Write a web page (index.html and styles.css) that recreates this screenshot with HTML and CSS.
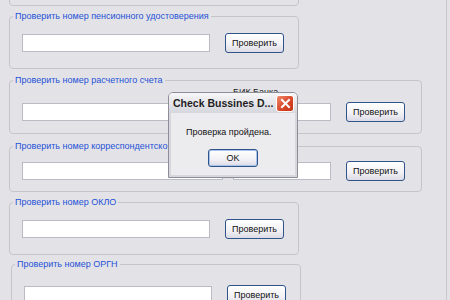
FILE: index.html
```html
<!DOCTYPE html>
<html>

<head>
    <title>Check Bussines Data</title>
    <link rel="stylesheet" href="styles.css">
</head>

<body>
    <div class="form">
        <!-- Cut off group at the top -->
        <fieldset class="group group-short group-top">
            <div class="row"></div>
        </fieldset>

        <!-- Pension certificate -->
        <fieldset class="group group-short group-pension">
            <legend>Проверить номер пенсионного удостоверения</legend>
            <div class="row">
                <input class="text" type="text">
                <button class="check">Проверить</button>
            </div>
        </fieldset>

        <!-- Settlement account -->
        <fieldset class="group group-wide group-account">
            <legend>Проверить номер расчетного счета</legend>
            <div class="row">
                <input class="text text-account" type="text">
                <div class="field">
                    <span class="field-caption">БИК Банка</span>
                    <input class="text text-bik" type="text">
                </div>
                <button class="check">Проверить</button>
            </div>
        </fieldset>

        <!-- Correspondent account -->
        <fieldset class="group group-wide group-corr">
            <legend>Проверить номер корреспондентского счета</legend>
            <div class="row">
                <input class="text text-account" type="text">
                <input class="text text-bik" type="text">
                <button class="check">Проверить</button>
            </div>
        </fieldset>

        <!-- OKPO -->
        <fieldset class="group group-short group-oklo">
            <legend>Проверить номер ОКЛО</legend>
            <div class="row">
                <input class="text" type="text">
                <button class="check">Проверить</button>
            </div>
        </fieldset>

        <!-- OGRN -->
        <fieldset class="group group-short group-orgn">
            <legend>Проверить номер ОРГН</legend>
            <div class="row">
                <input class="text" type="text">
                <button class="check">Проверить</button>
            </div>
        </fieldset>
    </div>

    <!-- Message box on top of the form -->
    <div class="dialog">
        <div class="dialog-title">
            <span class="dialog-caption">Check Bussines D...</span>
            <span class="dialog-close">
                <svg width="11" height="11" viewBox="0 0 11 11">
                    <path d="M2 2 L9 9 M9 2 L2 9" stroke="#fff" stroke-width="2" stroke-linecap="square" />
                </svg>
            </span>
        </div>
        <div class="dialog-body">
            <p class="dialog-text">Проверка пройдена.</p>
            <button class="dialog-ok">OK</button>
        </div>
    </div>
</body>
</html>
```

FILE: styles.css
```css
body {
    margin: 0;
    width: 450px;
    height: 300px;
    overflow: hidden;
    background: #e3e2e7;
    font-family: "Liberation Sans", Arial, sans-serif;
    font-size: 9px;
    position: relative;
}

.form {
    width: 447px;
    height: 300px;
    overflow: hidden;
    border-right: 1px solid #c9c8ce;
    box-sizing: border-box;
    padding-left: 9px;
    display: flex;
    flex-direction: column;
    align-items: flex-start;
}

/* group boxes */
.group {
    margin: 0;
    padding: 0;
    min-inline-size: 0;
    flex-shrink: 0;
    border: 1px solid #c6c5cb;
    border-radius: 4px;
    box-sizing: border-box;
}

.group legend {
    margin-left: 3px;
    padding: 0 2px;
    font-size: 9px;
    line-height: 12px;
    color: #1f52d6;
}

.group-short {
    width: 290px;
}

.group-wide {
    width: 413px;
}

.group-top {
    height: 50px;
    margin-top: -44px;
}

.group-pension {
    margin-top: 4px;
}

.group-account {
    margin-top: 5px;
}

.group-corr {
    margin-top: 6px;
}

.group-oklo {
    margin-top: 4px;
}

.group-orgn {
    margin-top: 3px;
    margin-left: 2px;
}

.row {
    display: flex;
    align-items: center;
    gap: 15px;
    height: 20px;
    padding: 11px 0 15px 12px;
}

.group-account .row {
    padding: 16px 0 11px 12px;
}

.group-corr .row {
    padding: 9px 0 10px 12px;
}

.group-orgn .row {
    padding-top: 15px;
}

.group-wide .row {
    gap: 10px;
}

.group-wide .check {
    margin-left: 5px;
}

/* inputs and buttons */
.text {
    width: 188px;
    height: 18px;
    margin: 0;
    padding: 0;
    border: 1px solid #b9bcc4;
    background: #fff;
    box-sizing: border-box;
}

.text-account {
    width: 201px;
}

.text-bik {
    width: 98px;
}

.field {
    display: flex;
    flex-direction: column;
}

.field-caption {
    height: 12px;
    margin-top: -17px;
    margin-bottom: 5px;
    font-size: 9px;
    line-height: 12px;
    color: #222;
}

.check {
    width: 59px;
    height: 20px;
    padding: 0;
    border: 1px solid #2f5489;
    border-radius: 3px;
    background: linear-gradient(#ffffff, #f1f0f4 60%, #dcdbe6);
    font-family: "Liberation Sans", Arial, sans-serif;
    font-size: 9px;
    color: #111;
}

/* message box */
.dialog {
    position: absolute;
    left: 168px;
    top: 92px;
    width: 130px;
    height: 86px;
    border: 1px solid #8e8e98;
    border-radius: 5px 5px 0 0;
    background: #ecebee;
    box-sizing: border-box;
    box-shadow: inset 0 0 0 2px #d7d6dc;
    display: flex;
    flex-direction: column;
}

.dialog-title {
    height: 20px;
    display: flex;
    align-items: center;
    padding: 0 3px 0 4px;
    border-radius: 4px 4px 0 0;
    background: linear-gradient(#f7f7f9, #e2e2e8 60%, #d6d6dd);
}

.dialog-caption {
    font-size: 10.5px;
    font-weight: bold;
    color: #1e1e1e;
    white-space: nowrap;
}

.dialog-close {
    margin-left: auto;
    flex-shrink: 0;
    width: 18px;
    height: 17px;
    box-sizing: border-box;
    border: 1px solid #fff;
    border-radius: 3px;
    background: linear-gradient(135deg, #ef8a6a, #d9472a 55%, #c03515);
    display: flex;
    align-items: center;
    justify-content: center;
}

.dialog-body {
    flex: 1;
    margin: 0 2px 2px;
    display: flex;
    flex-direction: column;
    align-items: center;
}

.dialog-text {
    align-self: flex-start;
    margin: 13px 0 0 15px;
    font-size: 9px;
    line-height: 12px;
    color: #111;
}

.dialog-ok {
    margin-top: 11px;
    width: 50px;
    height: 18px;
    padding: 0;
    border: 1px solid #2f5489;
    border-radius: 3px;
    background: linear-gradient(#ffffff, #f1f0f4 60%, #dcdbe6);
    box-shadow: inset 0 0 0 1px #a9c4ec;
    font-family: "Liberation Sans", Arial, sans-serif;
    font-size: 9px;
    color: #111;
}
```
